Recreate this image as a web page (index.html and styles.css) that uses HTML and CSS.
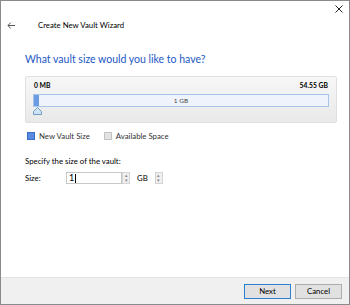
FILE: index.html
```html
<!DOCTYPE html>
<html>
<head>
<meta charset="utf-8">
<title>Create New Vault Wizard</title>
<link rel="stylesheet" href="styles.css">
</head>
<body>
<div class="window">
  <div class="topbar">
    <svg class="close" width="8" height="8" viewBox="0 0 8 8">
      <path d="M0.5 0.5 L7.5 7.5 M7.5 0.5 L0.5 7.5" stroke="#222" stroke-width="1" fill="none"/>
    </svg>
  </div>
  <div class="header">
    <svg class="back" width="8" height="7" viewBox="0 0 8 7">
      <path d="M8 3.5 H1 M3.8 0.6 L0.9 3.5 L3.8 6.4" stroke="#555" stroke-width="1" fill="none"/>
    </svg>
    <span class="title">Create New Vault Wizard</span>
  </div>
  <div class="content">
    <h1>What vault size would you like to have?</h1>
    <div class="panel">
      <div class="limits">
        <span>0 MB</span>
        <span>54.55 GB</span>
      </div>
      <div class="bar">
        <div class="fill" style="width: 5px"></div>
        <span class="bar-label">1 GB</span>
      </div>
      <svg class="thumb" width="9" height="8" viewBox="0 0 9 8">
        <path d="M4.5 0.5 L8.5 4.5 V7.5 H0.5 V4.5 Z" fill="#cfe3f5" stroke="#6c9cc8" stroke-width="1"/>
      </svg>
    </div>
    <div class="legend">
      <span class="swatch swatch-new"></span>
      <span>New Vault Size</span>
      <span class="swatch swatch-free"></span>
      <span>Available Space</span>
    </div>
    <p class="hint">Specify the size of the vault:</p>
    <div class="size-row">
      <label>Size:</label>
      <div class="field">1<span class="caret"></span></div>
      <div class="spin"><span>&#x25B4;</span><span>&#x25BE;</span></div>
      <span class="unit">GB</span>
      <div class="spin"><span>&#x25B4;</span><span>&#x25BE;</span></div>
    </div>
  </div>
  <div class="footer">
    <button class="btn btn-default">Next</button>
    <button class="btn">Cancel</button>
  </div>
</div>
</body>
</html>
```

FILE: styles.css
```css
* { box-sizing: border-box; }
body {
  margin: 0;
  font-family: Lato, "Noto Sans", sans-serif;
  font-size: 7.8px;
  color: #000;
}
.window {
  width: 350px;
  height: 305px;
  border: 1px solid #8a8a8a;
  background: #fff;
  display: flex;
  flex-direction: column;
}
.topbar {
  display: flex;
  justify-content: flex-end;
  height: 14px;
  padding: 4px 6px 0 0;
}
.header {
  display: flex;
  align-items: center;
  height: 20px;
  padding-left: 6px;
}
.back { margin-right: 23px; }
.title { font-size: 7.8px; }
.content {
  padding: 0 12px 0 24px;
  flex: 1;
}
h1 {
  margin: 16px 0 9px 0;
  font-size: 10.5px;
  font-weight: normal;
  color: #2257c4;
  line-height: 16px;
}
.panel {
  border: 1px solid #e0e0e0;
  border-radius: 2px;
  background: linear-gradient(#f7f7f7, #e9e9e9);
  padding: 3px 7px 6px 7px;
  height: 47px;
}
.limits {
  display: flex;
  justify-content: space-between;
  font-weight: bold;
  font-size: 6.8px;
  padding: 0 1px;
  line-height: 10px;
}
.bar {
  position: relative;
  margin-top: 4px;
  height: 13px;
  border: 1px solid #a9c4ea;
  background: #eef3fc;
  display: flex;
  align-items: center;
  justify-content: center;
}
.fill {
  position: absolute;
  left: 0;
  top: 0;
  bottom: 0;
  background: #6b9be0;
}
.bar-label {
  font-size: 6.5px;
  color: #444;
}
.thumb {
  display: block;
}
.legend {
  display: flex;
  align-items: center;
  margin-top: 8px;
  padding-left: 2px;
  color: #333;
}
.swatch {
  width: 8px;
  height: 8px;
  margin-right: 4px;
}
.swatch-new {
  background: #5a8be0;
  border: 1px solid #3b6cc4;
}
.swatch-free {
  background: #e2e2e2;
  border: 1px solid #c4c4c4;
  margin-left: 14px;
}
.hint {
  margin: 14px 0 5px 0;
  line-height: 12px;
}
.size-row {
  display: flex;
  align-items: center;
  height: 12px;
}
.size-row label { width: 41px; }
.field {
  display: flex;
  align-items: center;
  width: 56px;
  height: 12px;
  border: 1px solid #c8c8c8;
  padding-left: 2px;
  line-height: 10px;
  font-size: 9px;
}
.caret {
  width: 1px;
  height: 9px;
  margin-left: 1px;
  background: #000;
}
.spin {
  display: flex;
  flex-direction: column;
  width: 8px;
  height: 12px;
  border: 1px solid #d4d4d4;
  background: #f0f0f0;
  font-size: 5px;
  line-height: 5px;
  color: #888;
  text-align: center;
}
.unit {
  margin: 0 7px 0 7px;
}
.footer {
  height: 27px;
  background: #f0f0f0;
  border-top: 1px solid #e3e3e3;
  display: flex;
  justify-content: flex-end;
  align-items: center;
  gap: 4px;
  padding-right: 7px;
}
.btn {
  font-family: Lato, "Noto Sans", sans-serif;
  font-size: 7.8px;
  width: 47px;
  height: 15px;
  padding: 0;
  border: 1px solid #adadad;
  background: #e1e1e1;
  color: #000;
}
.btn-default { border-color: #2f7fd1; }
```
